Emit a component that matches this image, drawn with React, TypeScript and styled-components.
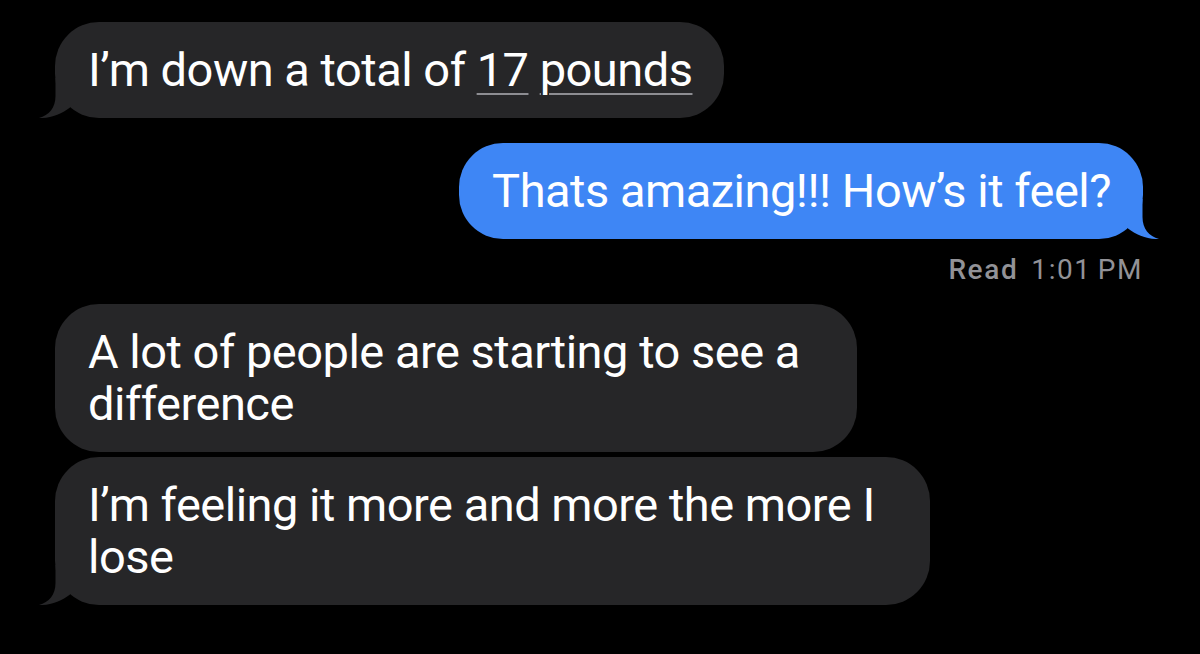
import React from "react";
import styled, { createGlobalStyle } from "styled-components";

const Global = createGlobalStyle`
  html, body { margin: 0; padding: 0; background: #000; }
  body { font-family: "Roboto", "Liberation Sans", sans-serif; -webkit-font-smoothing: antialiased; }
`;

const Thread = styled.div`
  width: 1200px;
  height: 654px;
  box-sizing: border-box;
  background: #000;
  padding: 22px 57px 0 55px;
  display: flex;
  flex-direction: column;
`;

const Row = styled.div<{ $out?: boolean; $gap: number }>`
  display: flex;
  justify-content: ${(p) => (p.$out ? "flex-end" : "flex-start")};
  margin-top: ${(p) => p.$gap}px;
`;

const Bubble = styled.div<{ $out?: boolean; $width?: number }>`
  position: relative;
  ${(p) => (p.$width ? `width: ${p.$width}px;` : "")}
  box-sizing: border-box;
  padding: 22px 32px 22px 33px;
  border-radius: 44px;
  background: ${(p) => (p.$out ? "#3e86f5" : "#262628")};
  color: #fff;
  font-size: 47px;
  line-height: 52px;
  letter-spacing: -0.5px;
`;

const Link = styled.span`
  text-decoration: underline;
  text-decoration-color: #8d8d92;
  text-decoration-thickness: 2px;
  text-underline-offset: 7px;
`;

const TailSvg = styled.svg<{ $out?: boolean }>`
  position: absolute;
  bottom: 0;
  width: 31px;
  height: 40px;
  ${(p) => (p.$out ? "right: -16px; transform: scaleX(-1);" : "left: -16px;")}
`;

const Receipt = styled.div`
  display: flex;
  justify-content: flex-end;
  margin-top: 16px;
  padding-right: 0;
  font-size: 28px;
  line-height: 30px;
  letter-spacing: 1.6px;
  color: #929297;
`;

const Strong = styled.span`
  font-weight: 500;
  margin-right: 13px;
`;

const Unit = styled.span`
  margin-left: 6px;
`;

function Tail({ out, color }: { out?: boolean; color: string }) {
  return (
    <TailSvg $out={out} viewBox="-16 -40 31 40">
      <path
        d="M0.5,-40 L0.5,-22 C0.5,-10 -6,-3 -16,0 C-5,0.5 7,-4 15,-10.5 L15,-40 Z"
        fill={color}
      />
    </TailSvg>
  );
}

export default function App() {
  return (
    <>
      <Global />
      <Thread>
        <Row $gap={0}>
          <Bubble>
            I’m down a total of <Link>17</Link> <Link>pounds</Link>
            <Tail color="#262628" />
          </Bubble>
        </Row>
        <Row $out $gap={25}>
          <Bubble $out>
            Thats amazing!!! How’s it feel?
            <Tail out color="#3e86f5" />
          </Bubble>
        </Row>
        <Receipt>
          <span>
            <Strong>Read</Strong>1:01<Unit>PM</Unit>
          </span>
        </Receipt>
        <Row $gap={19}>
          <Bubble $width={802}>A lot of people are starting to see a difference</Bubble>
        </Row>
        <Row $gap={5}>
          <Bubble $width={875}>
            I’m feeling it more and more the more I lose
            <Tail color="#262628" />
          </Bubble>
        </Row>
      </Thread>
    </>
  );
}
